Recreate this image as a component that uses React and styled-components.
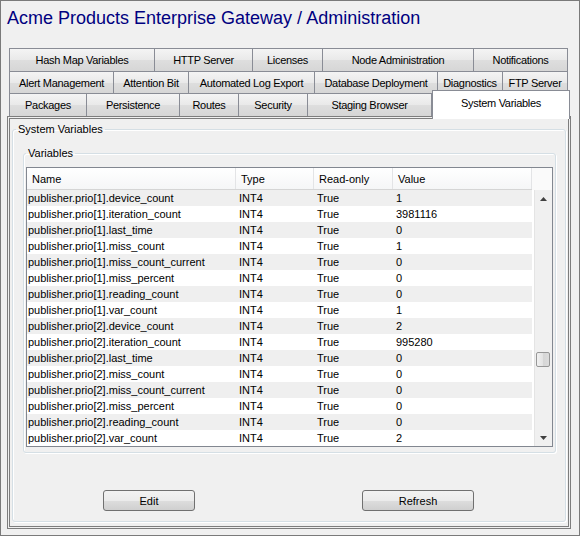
import React from 'react';
import styled, { createGlobalStyle } from 'styled-components';

const GlobalStyle = createGlobalStyle`
  html, body {
    margin: 0;
    padding: 0;
    background: #f0f0f0;
  }
  body {
    font-family: "Liberation Sans", Arial, sans-serif;
    font-size: 11px;
    color: #000;
  }
`;

const Window = styled.div`
  width: 580px;
  height: 536px;
  box-sizing: border-box;
  border: 1px solid #7a7a7a;
  background: #f0f0f0;
  padding: 0 8px 6px 6px;
  display: flex;
  flex-direction: column;
`;

const Title = styled.h1`
  margin: 6px 0 19px;
  font-size: 18px;
  font-weight: normal;
  line-height: 22px;
  color: #000080;
  white-space: nowrap;
`;

const TabStrip = styled.div`
  display: flex;
  flex-direction: column;
  margin-left: 2px;
`;

const TabRow = styled.div`
  display: flex;
  align-items: flex-start;
  height: ${p => p.$h}px;
  margin-top: -1px;

  &:first-child {
    margin-top: 0;
  }
`;

const Tab = styled.div`
  box-sizing: border-box;
  width: ${p => p.$w}px;
  height: ${p => (p.$active ? 29 : p.$h)}px;
  margin-top: ${p => (p.$active ? -3 : 0)}px;
  margin-left: ${p => (p.$active ? 0 : -1)}px;
  border: 1px solid #898c95;
  border-bottom: ${p => (p.$active ? 'none' : '1px solid #898c95')};
  background: ${p => (p.$active ? '#fff' : 'linear-gradient(#f4f4f4, #e9e9e9 50%, #dedede 51%, #d6d6d6)')};
  position: relative;
  z-index: ${p => (p.$active ? 2 : 0)};
  display: flex;
  align-items: center;
  padding-bottom: ${p => (p.$active ? 4 : 0)}px;
  justify-content: center;
  white-space: nowrap;
  letter-spacing: -0.3px;

  &:first-child {
    margin-left: 0;
  }
`;

const Panel = styled.div`
  box-sizing: border-box;
  flex: 1;
  width: 564px;
  margin-top: -1px;
  border: 3px double #7d7d7d;
  padding: 3px 2px 4px;
  position: relative;
  z-index: 1;
`;

const Group = styled.fieldset`
  margin: 0;
  min-width: 0;
  border: 1px solid #d5dfe5;
  border-radius: 3px;
  box-shadow: inset 1px 1px 0 #fff, 1px 1px 0 #fff;
  padding: ${p => p.$pad};
`;

const Legend = styled.legend`
  padding: 0 2px;
  margin-left: ${p => p.$shift}px;
  line-height: 15px;
  font-size: 11px;
`;

const TableBox = styled.div`
  border: 1px solid #828790;
  background: #fff;
  display: grid;
  grid-template-columns: 505px 1fr;
  grid-template-rows: 22px auto;
`;

const Header = styled.div`
  display: flex;
  box-sizing: border-box;
  border-bottom: 1px solid #d5d5d5;
  background: linear-gradient(#ffffff, #f5f6f7);
`;

const HeaderCell = styled.div`
  box-sizing: border-box;
  width: ${p => p.$w}px;
  padding-left: 5px;
  border-right: 1px solid #e3e4e6;
  display: flex;
  align-items: center;
  white-space: nowrap;
`;

const HeaderFiller = styled.div`
  background: #fafafa;
`;

const Rows = styled.div`
  display: flex;
  flex-direction: column;
`;

const Row = styled.div`
  display: flex;
  height: 16px;
  background: ${p => (p.$shaded ? '#efefef' : '#fff')};
`;

const Cell = styled.div`
  box-sizing: border-box;
  width: ${p => p.$w}px;
  padding-left: 3px;
  line-height: 16px;
  white-space: nowrap;
  overflow: hidden;

  &:first-child {
    padding-left: 1px;
  }
`;

const ScrollBar = styled.div`
  padding-left: 2px;
  background: #fff;
`;

const ScrollInner = styled.div`
  height: 100%;
  display: flex;
  flex-direction: column;
  background: #f0f0f0;
  border-left: 1px solid #e4e4e4;
`;

const ArrowButton = styled.div`
  height: 17px;
  display: flex;
  align-items: center;
  justify-content: center;
`;

const Track = styled.div`
  flex: 1;
  padding-top: 145px;
`;

const Thumb = styled.div`
  box-sizing: border-box;
  width: 14px;
  height: 15px;
  margin-left: 1px;
  border: 1px solid #979797;
  border-radius: 2px;
  background: linear-gradient(90deg, #f1f1f1, #e3e3e3 50%, #d6d6d6 51%, #dcdcdc);
`;

const ButtonRow = styled.div`
  display: flex;
  margin-top: 37px;
  padding-left: 80px;
  gap: 167px;
`;

const Button = styled.button`
  box-sizing: border-box;
  width: ${p => p.$w}px;
  height: 21px;
  border: 1px solid #707070;
  border-radius: 3px;
  background: linear-gradient(#f2f2f2, #ebebeb 50%, #dddddd 51%, #cfcfcf);
  font-family: "Liberation Sans", Arial, sans-serif;
  font-size: 11px;
  color: #000;
  padding: 0;
`;

const tabRows = [
  { h: 24, tabs: [['Hash Map Variables', 146], ['HTTP Server', 99], ['Licenses', 71], ['Node Administration', 152], ['Notifications', 95]] },
  { h: 23, tabs: [['Alert Management', 105], ['Attention Bit', 76], ['Automated Log Export', 127], ['Database Deployment', 124], ['Diagnostics', 66], ['FTP Server', 66]] },
  { h: 24, tabs: [['Packages', 78], ['Persistence', 94], ['Routes', 60], ['Security', 70], ['Staging Browser', 125], ['System Variables', 138, true]] },
];

const columns = [['Name', 209], ['Type', 78], ['Read-only', 79], ['Value', 139]];

const fields = [
  ['device_count', '1', '2'],
  ['iteration_count', '3981116', '995280'],
  ['last_time', '0', '0'],
  ['miss_count', '1', '0'],
  ['miss_count_current', '0', '0'],
  ['miss_percent', '0', '0'],
  ['reading_count', '0', '0'],
  ['var_count', '1', '2'],
];

const variables = [1, 2].flatMap(prio =>
  fields.map(([name, v1, v2]) => ({
    name: `publisher.prio[${prio}].${name}`,
    type: 'INT4',
    ro: 'True',
    value: prio === 1 ? v1 : v2,
  }))
);

const Arrow = ({ down }) => (
  <svg width="7" height="4" viewBox="0 0 7 4">
    <path d={down ? 'M0 0H7L3.5 4Z' : 'M0 4H7L3.5 0Z'} fill="#404040" />
  </svg>
);

export default function App() {
  return (
    <>
      <GlobalStyle />
      <Window>
        <Title>Acme Products Enterprise Gateway / Administration</Title>
        <TabStrip>
          {tabRows.map((row, i) => (
            <TabRow key={i} $h={row.h}>
              {row.tabs.map(([label, w, active]) => (
                <Tab key={label} $w={w} $h={row.h} $active={active}>{label}</Tab>
              ))}
            </TabRow>
          ))}
        </TabStrip>
        <Panel>
          <Group $pad="9px 9px 10px 10px">
            <Legend $shift={-7}>System Variables</Legend>
            <Group $pad="6px 2px 5px 2px">
              <Legend $shift={0}>Variables</Legend>
              <TableBox>
                <Header>
                  {columns.map(([label, w]) => (
                    <HeaderCell key={label} $w={w}>{label}</HeaderCell>
                  ))}
                </Header>
                <HeaderFiller />
                <Rows>
                  {variables.map((v, i) => (
                    <Row key={v.name} $shaded={i % 2 === 0}>
                      <Cell $w={209}>{v.name}</Cell>
                      <Cell $w={78}>{v.type}</Cell>
                      <Cell $w={79}>{v.ro}</Cell>
                      <Cell $w={139}>{v.value}</Cell>
                    </Row>
                  ))}
                </Rows>
                <ScrollBar>
                  <ScrollInner>
                    <ArrowButton><Arrow /></ArrowButton>
                    <Track><Thumb /></Track>
                    <ArrowButton><Arrow down /></ArrowButton>
                  </ScrollInner>
                </ScrollBar>
              </TableBox>
            </Group>
            <ButtonRow>
              <Button $w={92}>Edit</Button>
              <Button $w={112}>Refresh</Button>
            </ButtonRow>
          </Group>
        </Panel>
      </Window>
    </>
  );
}
